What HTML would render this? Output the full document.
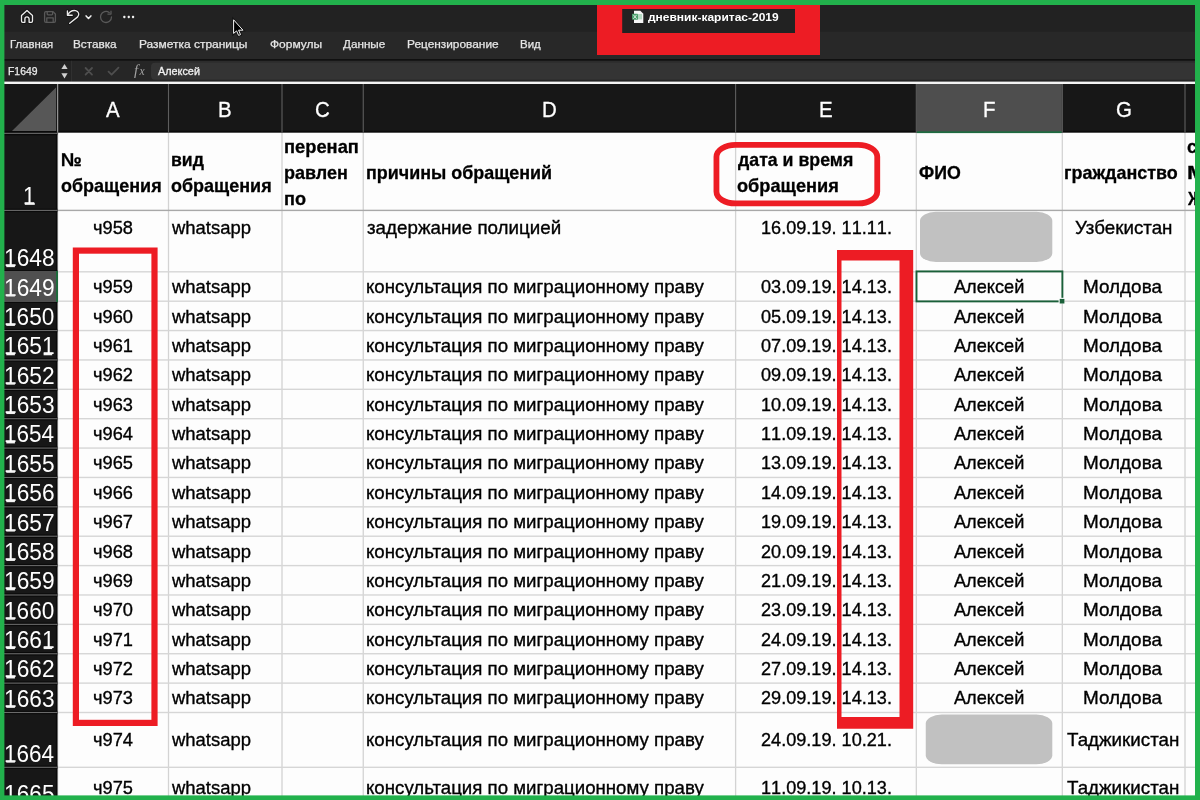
<!DOCTYPE html>
<html><head><meta charset="utf-8"><title>дневник-каритас-2019</title>
<style>
html,body{margin:0;padding:0;background:#fff;}
#p{will-change:transform;position:relative;width:1200px;height:800px;overflow:hidden;font-family:"Liberation Sans",sans-serif;}
.t{position:absolute;white-space:pre;transform-origin:0 50%;}
svg{position:absolute;left:0;top:0;}
</style></head><body><div id="p">
<svg width="1200" height="800" viewBox="0 0 1200 800">
<rect x="0" y="0" width="1200" height="800" fill="#171717"/>
<rect x="0" y="0" width="1200" height="84" fill="#222222"/>
<rect x="0" y="31.8" width="1200" height="52.2" fill="#282828"/>
<rect x="0" y="60" width="1200" height="24" fill="#2c2c2c"/>
<rect x="0" y="60" width="71" height="24" fill="#232323"/>
<rect x="71" y="60" width="1" height="24" fill="#303030"/>
<rect x="72" y="60" width="88" height="24" fill="#262626"/>
<rect x="151" y="62.8" width="1059" height="17" fill="#343434" rx="4" ry="4"/>
<rect x="160" y="79.8" width="1040" height="4.2" fill="#242424"/>
<rect x="0" y="59.2" width="1200" height="1.4" fill="#0c0c0c"/>
<rect x="0" y="81.6" width="1200" height="2.4" fill="#f4f4f4"/>
<rect x="0" y="130.8" width="1200" height="4.5" fill="#0a0a0a"/>
<rect x="57.3" y="132.7" width="1142.7" height="667.3" fill="#fdfdfd"/>
<rect x="597" y="5" width="223" height="50" fill="#ed1c24"/>
<rect x="622.2" y="9" width="172.8" height="24" fill="#222222"/>
<rect x="916.8" y="84" width="145" height="48.7" fill="#4e4e4e"/>
<rect x="916.8" y="131.3" width="145" height="1.8" fill="#1e6b41"/>
<rect x="56.95" y="84" width="1.1" height="48.7" fill="#5e5e5e"/>
<rect x="167.95" y="84" width="1.1" height="48.7" fill="#5e5e5e"/>
<rect x="281.45" y="84" width="1.1" height="48.7" fill="#5e5e5e"/>
<rect x="362.7" y="84" width="1.1" height="48.7" fill="#5e5e5e"/>
<rect x="735.05" y="84" width="1.1" height="48.7" fill="#5e5e5e"/>
<rect x="915.75" y="84" width="1.1" height="48.7" fill="#5e5e5e"/>
<rect x="1061.75" y="84" width="1.1" height="48.7" fill="#5e5e5e"/>
<rect x="1184.45" y="84" width="1.1" height="48.7" fill="#5e5e5e"/>
<polygon points="56,87.5 56,131 12,131" fill="#575757"/>
<rect x="167.85" y="133" width="1.3" height="667" fill="#d3d3d3"/>
<rect x="281.35" y="133" width="1.3" height="667" fill="#d3d3d3"/>
<rect x="362.6" y="133" width="1.3" height="667" fill="#d3d3d3"/>
<rect x="734.95" y="133" width="1.3" height="667" fill="#d3d3d3"/>
<rect x="915.65" y="133" width="1.3" height="667" fill="#d3d3d3"/>
<rect x="1061.65" y="133" width="1.3" height="667" fill="#d3d3d3"/>
<rect x="1184.35" y="133" width="1.3" height="667" fill="#d3d3d3"/>
<rect x="57.1" y="84" width="1.1" height="50" fill="#9a9a9a"/>
<rect x="57.3" y="134" width="0.8" height="666" fill="#8c8c8c"/>
<rect x="58" y="271.1" width="1142" height="1.4" fill="#d6d6d6"/>
<rect x="58" y="300.48" width="1142" height="1.4" fill="#d6d6d6"/>
<rect x="58" y="329.86" width="1142" height="1.4" fill="#d6d6d6"/>
<rect x="58" y="359.24" width="1142" height="1.4" fill="#d6d6d6"/>
<rect x="58" y="388.62" width="1142" height="1.4" fill="#d6d6d6"/>
<rect x="58" y="418" width="1142" height="1.4" fill="#d6d6d6"/>
<rect x="58" y="447.38" width="1142" height="1.4" fill="#d6d6d6"/>
<rect x="58" y="476.76" width="1142" height="1.4" fill="#d6d6d6"/>
<rect x="58" y="506.14" width="1142" height="1.4" fill="#d6d6d6"/>
<rect x="58" y="535.52" width="1142" height="1.4" fill="#d6d6d6"/>
<rect x="58" y="564.9" width="1142" height="1.4" fill="#d6d6d6"/>
<rect x="58" y="594.28" width="1142" height="1.4" fill="#d6d6d6"/>
<rect x="58" y="623.66" width="1142" height="1.4" fill="#d6d6d6"/>
<rect x="58" y="653.04" width="1142" height="1.4" fill="#d6d6d6"/>
<rect x="58" y="682.42" width="1142" height="1.4" fill="#d6d6d6"/>
<rect x="58" y="711.8" width="1142" height="1.4" fill="#d6d6d6"/>
<rect x="58" y="766.6" width="1142" height="1.4" fill="#d6d6d6"/>
<rect x="55.9" y="133" width="1.4" height="667" fill="#0a0a0a"/>
<rect x="0" y="131.65" width="57.3" height="3.4" fill="#0a0a0a"/>
<rect x="0" y="132.8" width="57.3" height="1.1" fill="#6a6a6a"/>
<rect x="0" y="208.7" width="57.3" height="3.4" fill="#0a0a0a"/>
<rect x="0" y="209.85" width="57.3" height="1.1" fill="#6a6a6a"/>
<rect x="0" y="270.1" width="57.3" height="3.4" fill="#0a0a0a"/>
<rect x="0" y="271.25" width="57.3" height="1.1" fill="#6a6a6a"/>
<rect x="0" y="299.48" width="57.3" height="3.4" fill="#0a0a0a"/>
<rect x="0" y="300.63" width="57.3" height="1.1" fill="#6a6a6a"/>
<rect x="0" y="328.86" width="57.3" height="3.4" fill="#0a0a0a"/>
<rect x="0" y="330.01" width="57.3" height="1.1" fill="#6a6a6a"/>
<rect x="0" y="358.24" width="57.3" height="3.4" fill="#0a0a0a"/>
<rect x="0" y="359.39" width="57.3" height="1.1" fill="#6a6a6a"/>
<rect x="0" y="387.62" width="57.3" height="3.4" fill="#0a0a0a"/>
<rect x="0" y="388.77" width="57.3" height="1.1" fill="#6a6a6a"/>
<rect x="0" y="417" width="57.3" height="3.4" fill="#0a0a0a"/>
<rect x="0" y="418.15" width="57.3" height="1.1" fill="#6a6a6a"/>
<rect x="0" y="446.38" width="57.3" height="3.4" fill="#0a0a0a"/>
<rect x="0" y="447.53" width="57.3" height="1.1" fill="#6a6a6a"/>
<rect x="0" y="475.76" width="57.3" height="3.4" fill="#0a0a0a"/>
<rect x="0" y="476.91" width="57.3" height="1.1" fill="#6a6a6a"/>
<rect x="0" y="505.14" width="57.3" height="3.4" fill="#0a0a0a"/>
<rect x="0" y="506.29" width="57.3" height="1.1" fill="#6a6a6a"/>
<rect x="0" y="534.52" width="57.3" height="3.4" fill="#0a0a0a"/>
<rect x="0" y="535.67" width="57.3" height="1.1" fill="#6a6a6a"/>
<rect x="0" y="563.9" width="57.3" height="3.4" fill="#0a0a0a"/>
<rect x="0" y="565.05" width="57.3" height="1.1" fill="#6a6a6a"/>
<rect x="0" y="593.28" width="57.3" height="3.4" fill="#0a0a0a"/>
<rect x="0" y="594.43" width="57.3" height="1.1" fill="#6a6a6a"/>
<rect x="0" y="622.66" width="57.3" height="3.4" fill="#0a0a0a"/>
<rect x="0" y="623.81" width="57.3" height="1.1" fill="#6a6a6a"/>
<rect x="0" y="652.04" width="57.3" height="3.4" fill="#0a0a0a"/>
<rect x="0" y="653.19" width="57.3" height="1.1" fill="#6a6a6a"/>
<rect x="0" y="681.42" width="57.3" height="3.4" fill="#0a0a0a"/>
<rect x="0" y="682.57" width="57.3" height="1.1" fill="#6a6a6a"/>
<rect x="0" y="710.8" width="57.3" height="3.4" fill="#0a0a0a"/>
<rect x="0" y="711.95" width="57.3" height="1.1" fill="#6a6a6a"/>
<rect x="0" y="765.6" width="57.3" height="3.4" fill="#0a0a0a"/>
<rect x="0" y="766.75" width="57.3" height="1.1" fill="#6a6a6a"/>
<rect x="58" y="209.7" width="1142" height="1.4" fill="#a8a8a8"/>
<rect x="0" y="271" width="57.3" height="30.78" fill="#505050"/>
<rect x="56" y="271" width="2" height="30.78" fill="#1e6b3c"/>
<rect x="920" y="211.8" width="132.3" height="50.2" fill="#c1c1c1" rx="16" ry="9"/>
<rect x="925.75" y="714.5" width="126.55" height="49.8" fill="#c1c1c1" rx="16" ry="9"/>
</svg>
<span class="t" style="left:9.74px;top:39.13px;font-size:11.3px;line-height:11.3px;color:#e6e6e6;transform:scaleX(1.0022);-webkit-text-stroke:0.25px #e6e6e6;">Главная</span>
<span class="t" style="left:73.46px;top:39.13px;font-size:11.3px;line-height:11.3px;color:#e6e6e6;transform:scaleX(1.0381);-webkit-text-stroke:0.25px #e6e6e6;">Вставка</span>
<span class="t" style="left:138.94px;top:39.13px;font-size:11.3px;line-height:11.3px;color:#e6e6e6;transform:scaleX(1.0580);-webkit-text-stroke:0.25px #e6e6e6;">Разметка страницы</span>
<span class="t" style="left:269.74px;top:39.13px;font-size:11.3px;line-height:11.3px;color:#e6e6e6;transform:scaleX(1.0607);-webkit-text-stroke:0.25px #e6e6e6;">Формулы</span>
<span class="t" style="left:342.84px;top:39.13px;font-size:11.3px;line-height:11.3px;color:#e6e6e6;transform:scaleX(1.0351);-webkit-text-stroke:0.25px #e6e6e6;">Данные</span>
<span class="t" style="left:406.95px;top:39.13px;font-size:11.3px;line-height:11.3px;color:#e6e6e6;transform:scaleX(1.0503);-webkit-text-stroke:0.25px #e6e6e6;">Рецензирование</span>
<span class="t" style="left:520.48px;top:39.13px;font-size:11.3px;line-height:11.3px;color:#e6e6e6;transform:scaleX(1.0165);-webkit-text-stroke:0.25px #e6e6e6;">Вид</span>
<span class="t" style="left:8.17px;top:65.71px;font-size:10.5px;line-height:10.5px;color:#ececec;transform:scaleX(0.9910);-webkit-text-stroke:0.25px #ececec;">F1649</span>
<span class="t" style="left:158.2px;top:65.81px;font-size:10.5px;line-height:10.5px;color:#f0f0f0;transform:scaleX(1.0326);-webkit-text-stroke:0.3px #f0f0f0;">Алексей</span>
<span class="t" style="left:647.94px;top:11.93px;font-size:11.3px;line-height:11.3px;font-weight:bold;color:#fff;transform:scaleX(1.0605);">дневник-каритас-2019</span>
<span class="t" style="left:106.2px;top:99.28px;font-size:22px;line-height:22px;color:#fff;transform:scaleX(0.9300);-webkit-text-stroke:0.3px #fff;">A</span>
<span class="t" style="left:218.14px;top:99.28px;font-size:22px;line-height:22px;color:#fff;transform:scaleX(0.9300);-webkit-text-stroke:0.3px #fff;">B</span>
<span class="t" style="left:315.11px;top:99.28px;font-size:22px;line-height:22px;color:#fff;transform:scaleX(0.9300);-webkit-text-stroke:0.3px #fff;">C</span>
<span class="t" style="left:541.7px;top:99.28px;font-size:22px;line-height:22px;color:#fff;transform:scaleX(0.9300);-webkit-text-stroke:0.3px #fff;">D</span>
<span class="t" style="left:818.74px;top:99.28px;font-size:22px;line-height:22px;color:#fff;transform:scaleX(0.9300);-webkit-text-stroke:0.3px #fff;">E</span>
<span class="t" style="left:982.6px;top:99.28px;font-size:22px;line-height:22px;color:#fff;transform:scaleX(0.9300);-webkit-text-stroke:0.3px #fff;">F</span>
<span class="t" style="left:1115.93px;top:99.28px;font-size:22px;line-height:22px;color:#fff;transform:scaleX(0.9300);-webkit-text-stroke:0.3px #fff;">G</span>
<span class="t" style="left:22.74px;top:184.83px;font-size:23px;line-height:23px;color:#fff;transform:scaleX(0.9595);">1</span>
<span class="t" style="left:3.8px;top:247.13px;font-size:23px;line-height:23px;color:#fff;transform:scaleX(0.9870);">1648</span>
<span class="t" style="left:3.79px;top:276.51px;font-size:23px;line-height:23px;color:#fff;transform:scaleX(0.9894);">1649</span>
<span class="t" style="left:3.8px;top:305.89px;font-size:23px;line-height:23px;color:#fff;transform:scaleX(0.9847);">1650</span>
<span class="t" style="left:3.79px;top:335.27px;font-size:23px;line-height:23px;color:#fff;transform:scaleX(0.9894);">1651</span>
<span class="t" style="left:3.79px;top:364.65px;font-size:23px;line-height:23px;color:#fff;transform:scaleX(0.9894);">1652</span>
<span class="t" style="left:3.8px;top:394.03px;font-size:23px;line-height:23px;color:#fff;transform:scaleX(0.9870);">1653</span>
<span class="t" style="left:3.81px;top:423.41px;font-size:23px;line-height:23px;color:#fff;transform:scaleX(0.9801);">1654</span>
<span class="t" style="left:3.8px;top:452.79px;font-size:23px;line-height:23px;color:#fff;transform:scaleX(0.9870);">1655</span>
<span class="t" style="left:3.8px;top:482.17px;font-size:23px;line-height:23px;color:#fff;transform:scaleX(0.9870);">1656</span>
<span class="t" style="left:3.79px;top:511.55px;font-size:23px;line-height:23px;color:#fff;transform:scaleX(0.9894);">1657</span>
<span class="t" style="left:3.8px;top:540.93px;font-size:23px;line-height:23px;color:#fff;transform:scaleX(0.9870);">1658</span>
<span class="t" style="left:3.79px;top:570.31px;font-size:23px;line-height:23px;color:#fff;transform:scaleX(0.9894);">1659</span>
<span class="t" style="left:3.8px;top:599.69px;font-size:23px;line-height:23px;color:#fff;transform:scaleX(0.9847);">1660</span>
<span class="t" style="left:3.79px;top:629.07px;font-size:23px;line-height:23px;color:#fff;transform:scaleX(0.9894);">1661</span>
<span class="t" style="left:3.79px;top:658.45px;font-size:23px;line-height:23px;color:#fff;transform:scaleX(0.9894);">1662</span>
<span class="t" style="left:3.8px;top:687.83px;font-size:23px;line-height:23px;color:#fff;transform:scaleX(0.9870);">1663</span>
<span class="t" style="left:3.81px;top:742.63px;font-size:23px;line-height:23px;color:#fff;transform:scaleX(0.9801);">1664</span>
<span class="t" style="left:3.8px;top:782.73px;font-size:23px;line-height:23px;color:#fff;transform:scaleX(0.9870);">1665</span>
<span class="t" style="left:60.79px;top:151.24px;font-size:18.5px;line-height:18.5px;font-weight:bold;transform:scaleX(1.0054);-webkit-text-stroke:0.3px #000;">№</span>
<span class="t" style="left:60.67px;top:177.44px;font-size:18.5px;line-height:18.5px;font-weight:bold;transform:scaleX(0.9719);-webkit-text-stroke:0.3px #000;">обращения</span>
<span class="t" style="left:170.85px;top:151.24px;font-size:18.5px;line-height:18.5px;font-weight:bold;transform:scaleX(0.9539);-webkit-text-stroke:0.3px #000;">вид</span>
<span class="t" style="left:171.37px;top:177.44px;font-size:18.5px;line-height:18.5px;font-weight:bold;transform:scaleX(0.9719);-webkit-text-stroke:0.3px #000;">обращения</span>
<span class="t" style="left:284.41px;top:137.94px;font-size:18.5px;line-height:18.5px;font-weight:bold;transform:scaleX(0.9895);-webkit-text-stroke:0.3px #000;">перенап</span>
<span class="t" style="left:284.43px;top:164.44px;font-size:18.5px;line-height:18.5px;font-weight:bold;transform:scaleX(0.9734);-webkit-text-stroke:0.3px #000;">равлен</span>
<span class="t" style="left:284.42px;top:190.14px;font-size:18.5px;line-height:18.5px;font-weight:bold;transform:scaleX(0.9793);-webkit-text-stroke:0.3px #000;">по</span>
<span class="t" style="left:365.84px;top:163.94px;font-size:18.5px;line-height:18.5px;font-weight:bold;transform:scaleX(0.9678);-webkit-text-stroke:0.3px #000;">причины обращений</span>
<span class="t" style="left:737.91px;top:151.24px;font-size:18.5px;line-height:18.5px;font-weight:bold;transform:scaleX(0.9591);-webkit-text-stroke:0.3px #000;">дата и время</span>
<span class="t" style="left:737.36px;top:177.44px;font-size:18.5px;line-height:18.5px;font-weight:bold;transform:scaleX(0.9837);-webkit-text-stroke:0.3px #000;">обращения</span>
<span class="t" style="left:919.47px;top:164.24px;font-size:18.5px;line-height:18.5px;font-weight:bold;transform:scaleX(0.9602);-webkit-text-stroke:0.3px #000;">ФИО</span>
<span class="t" style="left:1064.43px;top:164.24px;font-size:18.5px;line-height:18.5px;font-weight:bold;transform:scaleX(0.9694);-webkit-text-stroke:0.3px #000;">гражданство</span>
<span class="t" style="left:1187.36px;top:137.94px;font-size:18.5px;line-height:18.5px;font-weight:bold;transform:scaleX(0.9828);-webkit-text-stroke:0.3px #000;">с</span>
<span class="t" style="left:1186.52px;top:164.44px;font-size:18.5px;line-height:18.5px;font-weight:bold;transform:scaleX(1.2268);-webkit-text-stroke:0.3px #000;">М</span>
<span class="t" style="left:1188.08px;top:190.14px;font-size:18.5px;line-height:18.5px;font-weight:bold;transform:scaleX(0.8861);-webkit-text-stroke:0.3px #000;">Ж</span>
<span class="t" style="left:93.01px;top:218.84px;font-size:18.5px;line-height:18.5px;transform:scaleX(0.9850);-webkit-text-stroke:0.35px #000;">ч958</span>
<span class="t" style="left:171.89px;top:218.84px;font-size:18.5px;line-height:18.5px;transform:scaleX(0.9970);-webkit-text-stroke:0.35px #000;">whatsapp</span>
<span class="t" style="left:366.72px;top:218.84px;font-size:18.5px;line-height:18.5px;transform:scaleX(1.0147);-webkit-text-stroke:0.35px #000;">задержание полицией</span>
<span class="t" style="left:760.6px;top:218.84px;font-size:18.5px;line-height:18.5px;transform:scaleX(0.979);font-kerning:none;-webkit-text-stroke:0.35px #000;">16.09.19. 11.11.</span>
<span class="t" style="left:1074.56px;top:218.84px;font-size:18.5px;line-height:18.5px;transform:scaleX(1.0138);-webkit-text-stroke:0.35px #000;">Узбекистан</span>
<span class="t" style="left:93.06px;top:278.12px;font-size:18.5px;line-height:18.5px;transform:scaleX(0.9850);-webkit-text-stroke:0.35px #000;">ч959</span>
<span class="t" style="left:171.89px;top:278.12px;font-size:18.5px;line-height:18.5px;transform:scaleX(0.9970);-webkit-text-stroke:0.35px #000;">whatsapp</span>
<span class="t" style="left:365.89px;top:278.12px;font-size:18.5px;line-height:18.5px;transform:scaleX(1.0085);-webkit-text-stroke:0.35px #000;">консультация по миграционному праву</span>
<span class="t" style="left:760.6px;top:278.12px;font-size:18.5px;line-height:18.5px;transform:scaleX(0.979);font-kerning:none;-webkit-text-stroke:0.35px #000;">03.09.19. 14.13.</span>
<span class="t" style="left:954.3px;top:278.12px;font-size:18.5px;line-height:18.5px;transform:scaleX(0.9815);-webkit-text-stroke:0.35px #000;">Алексей</span>
<span class="t" style="left:1083.04px;top:278.12px;font-size:18.5px;line-height:18.5px;transform:scaleX(1.0218);-webkit-text-stroke:0.35px #000;">Молдова</span>
<span class="t" style="left:92.96px;top:307.5px;font-size:18.5px;line-height:18.5px;transform:scaleX(0.9850);-webkit-text-stroke:0.35px #000;">ч960</span>
<span class="t" style="left:171.89px;top:307.5px;font-size:18.5px;line-height:18.5px;transform:scaleX(0.9970);-webkit-text-stroke:0.35px #000;">whatsapp</span>
<span class="t" style="left:365.89px;top:307.5px;font-size:18.5px;line-height:18.5px;transform:scaleX(1.0085);-webkit-text-stroke:0.35px #000;">консультация по миграционному праву</span>
<span class="t" style="left:760.6px;top:307.5px;font-size:18.5px;line-height:18.5px;transform:scaleX(0.979);font-kerning:none;-webkit-text-stroke:0.35px #000;">05.09.19. 14.13.</span>
<span class="t" style="left:954.3px;top:307.5px;font-size:18.5px;line-height:18.5px;transform:scaleX(0.9815);-webkit-text-stroke:0.35px #000;">Алексей</span>
<span class="t" style="left:1083.04px;top:307.5px;font-size:18.5px;line-height:18.5px;transform:scaleX(1.0218);-webkit-text-stroke:0.35px #000;">Молдова</span>
<span class="t" style="left:93.06px;top:336.88px;font-size:18.5px;line-height:18.5px;transform:scaleX(0.9850);-webkit-text-stroke:0.35px #000;">ч961</span>
<span class="t" style="left:171.89px;top:336.88px;font-size:18.5px;line-height:18.5px;transform:scaleX(0.9970);-webkit-text-stroke:0.35px #000;">whatsapp</span>
<span class="t" style="left:365.89px;top:336.88px;font-size:18.5px;line-height:18.5px;transform:scaleX(1.0085);-webkit-text-stroke:0.35px #000;">консультация по миграционному праву</span>
<span class="t" style="left:760.6px;top:336.88px;font-size:18.5px;line-height:18.5px;transform:scaleX(0.979);font-kerning:none;-webkit-text-stroke:0.35px #000;">07.09.19. 14.13.</span>
<span class="t" style="left:954.3px;top:336.88px;font-size:18.5px;line-height:18.5px;transform:scaleX(0.9815);-webkit-text-stroke:0.35px #000;">Алексей</span>
<span class="t" style="left:1083.04px;top:336.88px;font-size:18.5px;line-height:18.5px;transform:scaleX(1.0218);-webkit-text-stroke:0.35px #000;">Молдова</span>
<span class="t" style="left:93.06px;top:366.26px;font-size:18.5px;line-height:18.5px;transform:scaleX(0.9850);-webkit-text-stroke:0.35px #000;">ч962</span>
<span class="t" style="left:171.89px;top:366.26px;font-size:18.5px;line-height:18.5px;transform:scaleX(0.9970);-webkit-text-stroke:0.35px #000;">whatsapp</span>
<span class="t" style="left:365.89px;top:366.26px;font-size:18.5px;line-height:18.5px;transform:scaleX(1.0085);-webkit-text-stroke:0.35px #000;">консультация по миграционному праву</span>
<span class="t" style="left:760.6px;top:366.26px;font-size:18.5px;line-height:18.5px;transform:scaleX(0.979);font-kerning:none;-webkit-text-stroke:0.35px #000;">09.09.19. 14.13.</span>
<span class="t" style="left:954.3px;top:366.26px;font-size:18.5px;line-height:18.5px;transform:scaleX(0.9815);-webkit-text-stroke:0.35px #000;">Алексей</span>
<span class="t" style="left:1083.04px;top:366.26px;font-size:18.5px;line-height:18.5px;transform:scaleX(1.0218);-webkit-text-stroke:0.35px #000;">Молдова</span>
<span class="t" style="left:93.01px;top:395.64px;font-size:18.5px;line-height:18.5px;transform:scaleX(0.9850);-webkit-text-stroke:0.35px #000;">ч963</span>
<span class="t" style="left:171.89px;top:395.64px;font-size:18.5px;line-height:18.5px;transform:scaleX(0.9970);-webkit-text-stroke:0.35px #000;">whatsapp</span>
<span class="t" style="left:365.89px;top:395.64px;font-size:18.5px;line-height:18.5px;transform:scaleX(1.0085);-webkit-text-stroke:0.35px #000;">консультация по миграционному праву</span>
<span class="t" style="left:760.6px;top:395.64px;font-size:18.5px;line-height:18.5px;transform:scaleX(0.979);font-kerning:none;-webkit-text-stroke:0.35px #000;">10.09.19. 14.13.</span>
<span class="t" style="left:954.3px;top:395.64px;font-size:18.5px;line-height:18.5px;transform:scaleX(0.9815);-webkit-text-stroke:0.35px #000;">Алексей</span>
<span class="t" style="left:1083.04px;top:395.64px;font-size:18.5px;line-height:18.5px;transform:scaleX(1.0218);-webkit-text-stroke:0.35px #000;">Молдова</span>
<span class="t" style="left:92.87px;top:425.02px;font-size:18.5px;line-height:18.5px;transform:scaleX(0.9850);-webkit-text-stroke:0.35px #000;">ч964</span>
<span class="t" style="left:171.89px;top:425.02px;font-size:18.5px;line-height:18.5px;transform:scaleX(0.9970);-webkit-text-stroke:0.35px #000;">whatsapp</span>
<span class="t" style="left:365.89px;top:425.02px;font-size:18.5px;line-height:18.5px;transform:scaleX(1.0085);-webkit-text-stroke:0.35px #000;">консультация по миграционному праву</span>
<span class="t" style="left:760.6px;top:425.02px;font-size:18.5px;line-height:18.5px;transform:scaleX(0.979);font-kerning:none;-webkit-text-stroke:0.35px #000;">11.09.19. 14.13.</span>
<span class="t" style="left:954.3px;top:425.02px;font-size:18.5px;line-height:18.5px;transform:scaleX(0.9815);-webkit-text-stroke:0.35px #000;">Алексей</span>
<span class="t" style="left:1083.04px;top:425.02px;font-size:18.5px;line-height:18.5px;transform:scaleX(1.0218);-webkit-text-stroke:0.35px #000;">Молдова</span>
<span class="t" style="left:93.01px;top:454.4px;font-size:18.5px;line-height:18.5px;transform:scaleX(0.9850);-webkit-text-stroke:0.35px #000;">ч965</span>
<span class="t" style="left:171.89px;top:454.4px;font-size:18.5px;line-height:18.5px;transform:scaleX(0.9970);-webkit-text-stroke:0.35px #000;">whatsapp</span>
<span class="t" style="left:365.89px;top:454.4px;font-size:18.5px;line-height:18.5px;transform:scaleX(1.0085);-webkit-text-stroke:0.35px #000;">консультация по миграционному праву</span>
<span class="t" style="left:760.6px;top:454.4px;font-size:18.5px;line-height:18.5px;transform:scaleX(0.979);font-kerning:none;-webkit-text-stroke:0.35px #000;">13.09.19. 14.13.</span>
<span class="t" style="left:954.3px;top:454.4px;font-size:18.5px;line-height:18.5px;transform:scaleX(0.9815);-webkit-text-stroke:0.35px #000;">Алексей</span>
<span class="t" style="left:1083.04px;top:454.4px;font-size:18.5px;line-height:18.5px;transform:scaleX(1.0218);-webkit-text-stroke:0.35px #000;">Молдова</span>
<span class="t" style="left:93.01px;top:483.78px;font-size:18.5px;line-height:18.5px;transform:scaleX(0.9850);-webkit-text-stroke:0.35px #000;">ч966</span>
<span class="t" style="left:171.89px;top:483.78px;font-size:18.5px;line-height:18.5px;transform:scaleX(0.9970);-webkit-text-stroke:0.35px #000;">whatsapp</span>
<span class="t" style="left:365.89px;top:483.78px;font-size:18.5px;line-height:18.5px;transform:scaleX(1.0085);-webkit-text-stroke:0.35px #000;">консультация по миграционному праву</span>
<span class="t" style="left:760.6px;top:483.78px;font-size:18.5px;line-height:18.5px;transform:scaleX(0.979);font-kerning:none;-webkit-text-stroke:0.35px #000;">14.09.19. 14.13.</span>
<span class="t" style="left:954.3px;top:483.78px;font-size:18.5px;line-height:18.5px;transform:scaleX(0.9815);-webkit-text-stroke:0.35px #000;">Алексей</span>
<span class="t" style="left:1083.04px;top:483.78px;font-size:18.5px;line-height:18.5px;transform:scaleX(1.0218);-webkit-text-stroke:0.35px #000;">Молдова</span>
<span class="t" style="left:93.06px;top:513.16px;font-size:18.5px;line-height:18.5px;transform:scaleX(0.9850);-webkit-text-stroke:0.35px #000;">ч967</span>
<span class="t" style="left:171.89px;top:513.16px;font-size:18.5px;line-height:18.5px;transform:scaleX(0.9970);-webkit-text-stroke:0.35px #000;">whatsapp</span>
<span class="t" style="left:365.89px;top:513.16px;font-size:18.5px;line-height:18.5px;transform:scaleX(1.0085);-webkit-text-stroke:0.35px #000;">консультация по миграционному праву</span>
<span class="t" style="left:760.6px;top:513.16px;font-size:18.5px;line-height:18.5px;transform:scaleX(0.979);font-kerning:none;-webkit-text-stroke:0.35px #000;">19.09.19. 14.13.</span>
<span class="t" style="left:954.3px;top:513.16px;font-size:18.5px;line-height:18.5px;transform:scaleX(0.9815);-webkit-text-stroke:0.35px #000;">Алексей</span>
<span class="t" style="left:1083.04px;top:513.16px;font-size:18.5px;line-height:18.5px;transform:scaleX(1.0218);-webkit-text-stroke:0.35px #000;">Молдова</span>
<span class="t" style="left:93.01px;top:542.54px;font-size:18.5px;line-height:18.5px;transform:scaleX(0.9850);-webkit-text-stroke:0.35px #000;">ч968</span>
<span class="t" style="left:171.89px;top:542.54px;font-size:18.5px;line-height:18.5px;transform:scaleX(0.9970);-webkit-text-stroke:0.35px #000;">whatsapp</span>
<span class="t" style="left:365.89px;top:542.54px;font-size:18.5px;line-height:18.5px;transform:scaleX(1.0085);-webkit-text-stroke:0.35px #000;">консультация по миграционному праву</span>
<span class="t" style="left:760.6px;top:542.54px;font-size:18.5px;line-height:18.5px;transform:scaleX(0.979);font-kerning:none;-webkit-text-stroke:0.35px #000;">20.09.19. 14.13.</span>
<span class="t" style="left:954.3px;top:542.54px;font-size:18.5px;line-height:18.5px;transform:scaleX(0.9815);-webkit-text-stroke:0.35px #000;">Алексей</span>
<span class="t" style="left:1083.04px;top:542.54px;font-size:18.5px;line-height:18.5px;transform:scaleX(1.0218);-webkit-text-stroke:0.35px #000;">Молдова</span>
<span class="t" style="left:93.06px;top:571.92px;font-size:18.5px;line-height:18.5px;transform:scaleX(0.9850);-webkit-text-stroke:0.35px #000;">ч969</span>
<span class="t" style="left:171.89px;top:571.92px;font-size:18.5px;line-height:18.5px;transform:scaleX(0.9970);-webkit-text-stroke:0.35px #000;">whatsapp</span>
<span class="t" style="left:365.89px;top:571.92px;font-size:18.5px;line-height:18.5px;transform:scaleX(1.0085);-webkit-text-stroke:0.35px #000;">консультация по миграционному праву</span>
<span class="t" style="left:760.6px;top:571.92px;font-size:18.5px;line-height:18.5px;transform:scaleX(0.979);font-kerning:none;-webkit-text-stroke:0.35px #000;">21.09.19. 14.13.</span>
<span class="t" style="left:954.3px;top:571.92px;font-size:18.5px;line-height:18.5px;transform:scaleX(0.9815);-webkit-text-stroke:0.35px #000;">Алексей</span>
<span class="t" style="left:1083.04px;top:571.92px;font-size:18.5px;line-height:18.5px;transform:scaleX(1.0218);-webkit-text-stroke:0.35px #000;">Молдова</span>
<span class="t" style="left:92.96px;top:601.3px;font-size:18.5px;line-height:18.5px;transform:scaleX(0.9850);-webkit-text-stroke:0.35px #000;">ч970</span>
<span class="t" style="left:171.89px;top:601.3px;font-size:18.5px;line-height:18.5px;transform:scaleX(0.9970);-webkit-text-stroke:0.35px #000;">whatsapp</span>
<span class="t" style="left:365.89px;top:601.3px;font-size:18.5px;line-height:18.5px;transform:scaleX(1.0085);-webkit-text-stroke:0.35px #000;">консультация по миграционному праву</span>
<span class="t" style="left:760.6px;top:601.3px;font-size:18.5px;line-height:18.5px;transform:scaleX(0.979);font-kerning:none;-webkit-text-stroke:0.35px #000;">23.09.19. 14.13.</span>
<span class="t" style="left:954.3px;top:601.3px;font-size:18.5px;line-height:18.5px;transform:scaleX(0.9815);-webkit-text-stroke:0.35px #000;">Алексей</span>
<span class="t" style="left:1083.04px;top:601.3px;font-size:18.5px;line-height:18.5px;transform:scaleX(1.0218);-webkit-text-stroke:0.35px #000;">Молдова</span>
<span class="t" style="left:93.06px;top:630.68px;font-size:18.5px;line-height:18.5px;transform:scaleX(0.9850);-webkit-text-stroke:0.35px #000;">ч971</span>
<span class="t" style="left:171.89px;top:630.68px;font-size:18.5px;line-height:18.5px;transform:scaleX(0.9970);-webkit-text-stroke:0.35px #000;">whatsapp</span>
<span class="t" style="left:365.89px;top:630.68px;font-size:18.5px;line-height:18.5px;transform:scaleX(1.0085);-webkit-text-stroke:0.35px #000;">консультация по миграционному праву</span>
<span class="t" style="left:760.6px;top:630.68px;font-size:18.5px;line-height:18.5px;transform:scaleX(0.979);font-kerning:none;-webkit-text-stroke:0.35px #000;">24.09.19. 14.13.</span>
<span class="t" style="left:954.3px;top:630.68px;font-size:18.5px;line-height:18.5px;transform:scaleX(0.9815);-webkit-text-stroke:0.35px #000;">Алексей</span>
<span class="t" style="left:1083.04px;top:630.68px;font-size:18.5px;line-height:18.5px;transform:scaleX(1.0218);-webkit-text-stroke:0.35px #000;">Молдова</span>
<span class="t" style="left:93.06px;top:660.06px;font-size:18.5px;line-height:18.5px;transform:scaleX(0.9850);-webkit-text-stroke:0.35px #000;">ч972</span>
<span class="t" style="left:171.89px;top:660.06px;font-size:18.5px;line-height:18.5px;transform:scaleX(0.9970);-webkit-text-stroke:0.35px #000;">whatsapp</span>
<span class="t" style="left:365.89px;top:660.06px;font-size:18.5px;line-height:18.5px;transform:scaleX(1.0085);-webkit-text-stroke:0.35px #000;">консультация по миграционному праву</span>
<span class="t" style="left:760.6px;top:660.06px;font-size:18.5px;line-height:18.5px;transform:scaleX(0.979);font-kerning:none;-webkit-text-stroke:0.35px #000;">27.09.19. 14.13.</span>
<span class="t" style="left:954.3px;top:660.06px;font-size:18.5px;line-height:18.5px;transform:scaleX(0.9815);-webkit-text-stroke:0.35px #000;">Алексей</span>
<span class="t" style="left:1083.04px;top:660.06px;font-size:18.5px;line-height:18.5px;transform:scaleX(1.0218);-webkit-text-stroke:0.35px #000;">Молдова</span>
<span class="t" style="left:93.01px;top:689.44px;font-size:18.5px;line-height:18.5px;transform:scaleX(0.9850);-webkit-text-stroke:0.35px #000;">ч973</span>
<span class="t" style="left:171.89px;top:689.44px;font-size:18.5px;line-height:18.5px;transform:scaleX(0.9970);-webkit-text-stroke:0.35px #000;">whatsapp</span>
<span class="t" style="left:365.89px;top:689.44px;font-size:18.5px;line-height:18.5px;transform:scaleX(1.0085);-webkit-text-stroke:0.35px #000;">консультация по миграционному праву</span>
<span class="t" style="left:760.6px;top:689.44px;font-size:18.5px;line-height:18.5px;transform:scaleX(0.979);font-kerning:none;-webkit-text-stroke:0.35px #000;">29.09.19. 14.13.</span>
<span class="t" style="left:954.3px;top:689.44px;font-size:18.5px;line-height:18.5px;transform:scaleX(0.9815);-webkit-text-stroke:0.35px #000;">Алексей</span>
<span class="t" style="left:1083.04px;top:689.44px;font-size:18.5px;line-height:18.5px;transform:scaleX(1.0218);-webkit-text-stroke:0.35px #000;">Молдова</span>
<span class="t" style="left:92.87px;top:731.34px;font-size:18.5px;line-height:18.5px;transform:scaleX(0.9850);-webkit-text-stroke:0.35px #000;">ч974</span>
<span class="t" style="left:171.89px;top:731.34px;font-size:18.5px;line-height:18.5px;transform:scaleX(0.9970);-webkit-text-stroke:0.35px #000;">whatsapp</span>
<span class="t" style="left:365.89px;top:731.34px;font-size:18.5px;line-height:18.5px;transform:scaleX(1.0085);-webkit-text-stroke:0.35px #000;">консультация по миграционному праву</span>
<span class="t" style="left:760.6px;top:731.34px;font-size:18.5px;line-height:18.5px;transform:scaleX(0.979);font-kerning:none;-webkit-text-stroke:0.35px #000;">24.09.19. 10.21.</span>
<span class="t" style="left:1067.15px;top:731.34px;font-size:18.5px;line-height:18.5px;transform:scaleX(1.0155);-webkit-text-stroke:0.35px #000;">Таджикистан</span>
<span class="t" style="left:93.01px;top:778.84px;font-size:18.5px;line-height:18.5px;transform:scaleX(0.9850);-webkit-text-stroke:0.35px #000;">ч975</span>
<span class="t" style="left:171.89px;top:778.84px;font-size:18.5px;line-height:18.5px;transform:scaleX(0.9970);-webkit-text-stroke:0.35px #000;">whatsapp</span>
<span class="t" style="left:365.89px;top:778.84px;font-size:18.5px;line-height:18.5px;transform:scaleX(1.0085);-webkit-text-stroke:0.35px #000;">консультация по миграционному праву</span>
<span class="t" style="left:760.6px;top:778.84px;font-size:18.5px;line-height:18.5px;transform:scaleX(0.979);font-kerning:none;-webkit-text-stroke:0.35px #000;">11.09.19. 10.13.</span>
<span class="t" style="left:1067.15px;top:778.84px;font-size:18.5px;line-height:18.5px;transform:scaleX(1.0155);-webkit-text-stroke:0.35px #000;">Таджикистан</span>
<span class="t" style="left:134px;top:63px;font-family:'Liberation Serif',serif;font-style:italic;font-size:15px;line-height:15px;color:#a2a2a2;">f</span>
<span class="t" style="left:139.6px;top:66.4px;font-family:'Liberation Serif',serif;font-style:italic;font-size:11.5px;line-height:11.5px;color:#a2a2a2;">x</span>
<svg width="1200" height="800" viewBox="0 0 1200 800">
<rect x="24.8" y="203.15" width="10" height="1.7" fill="#f4f4f4"/>
<rect x="6.3" y="265.45" width="8.6" height="1.7" fill="#f4f4f4"/>
<rect x="6.3" y="294.83" width="8.6" height="1.7" fill="#f4f4f4"/>
<rect x="6.3" y="324.21" width="8.6" height="1.7" fill="#f4f4f4"/>
<rect x="6.3" y="353.59" width="8.6" height="1.7" fill="#f4f4f4"/>
<rect x="43.6" y="353.59" width="8.6" height="1.7" fill="#f4f4f4"/>
<rect x="6.3" y="382.97" width="8.6" height="1.7" fill="#f4f4f4"/>
<rect x="6.3" y="412.35" width="8.6" height="1.7" fill="#f4f4f4"/>
<rect x="6.3" y="441.73" width="8.6" height="1.7" fill="#f4f4f4"/>
<rect x="6.3" y="471.11" width="8.6" height="1.7" fill="#f4f4f4"/>
<rect x="6.3" y="500.49" width="8.6" height="1.7" fill="#f4f4f4"/>
<rect x="6.3" y="529.87" width="8.6" height="1.7" fill="#f4f4f4"/>
<rect x="6.3" y="559.25" width="8.6" height="1.7" fill="#f4f4f4"/>
<rect x="6.3" y="588.63" width="8.6" height="1.7" fill="#f4f4f4"/>
<rect x="6.3" y="618.01" width="8.6" height="1.7" fill="#f4f4f4"/>
<rect x="6.3" y="647.39" width="8.6" height="1.7" fill="#f4f4f4"/>
<rect x="43.6" y="647.39" width="8.6" height="1.7" fill="#f4f4f4"/>
<rect x="6.3" y="676.77" width="8.6" height="1.7" fill="#f4f4f4"/>
<rect x="6.3" y="706.15" width="8.6" height="1.7" fill="#f4f4f4"/>
<rect x="6.3" y="760.95" width="8.6" height="1.7" fill="#f4f4f4"/>
<rect x="6.3" y="801.05" width="8.6" height="1.7" fill="#f4f4f4"/>
<rect x="916.5" y="271.4" width="145.9" height="30" fill="none" stroke="#1a6039" stroke-width="1.9"/>
<rect x="1058.6" y="297.8" width="5.8" height="5.7" fill="#fdfdfd"/>
<rect x="1059.7" y="298.9" width="4.7" height="4.6" fill="#1a6039"/>
<rect x="75.9" y="250.6" width="78.6" height="472.3" fill="none" stroke="#ed1c24" stroke-width="6.2"/>
<path fill-rule="evenodd" fill="#ed1c24" d="M837 250 H913.2 V728.8 H837 Z M841.5 260.5 V717 H899.5 V260.5 Z"/>
<rect x="716.45" y="144.85" width="160.8" height="58.6" rx="19" ry="12" fill="none" stroke="#ed1c24" stroke-width="5.8"/>

<g fill="none" stroke-linecap="round" stroke-linejoin="round">
 <path d="M21.5 15.4 L27 10.4 L32.5 15.4 V21.1 a1.2 1.2 0 0 1 -1.2 1.2 H29.1 V18.9 a2.1 2.1 0 0 0 -4.2 0 V22.3 H22.7 a1.2 1.2 0 0 1 -1.2 -1.2 Z" stroke="#111" stroke-width="3"/>
 <path d="M21.5 15.4 L27 10.4 L32.5 15.4 V21.1 a1.2 1.2 0 0 1 -1.2 1.2 H29.1 V18.9 a2.1 2.1 0 0 0 -4.2 0 V22.3 H22.7 a1.2 1.2 0 0 1 -1.2 -1.2 Z" stroke="#ececec" stroke-width="1.35"/>
 <g stroke="#595959" stroke-width="1.3">
  <path d="M46 11.6 H53 L55.4 14 V21 a1.4 1.4 0 0 1 -1.4 1.4 H46 a1.4 1.4 0 0 1 -1.4 -1.4 V13 a1.4 1.4 0 0 1 1.4 -1.4 Z"/>
  <path d="M47.2 11.8 V14 a0.8 0.8 0 0 0 0.8 0.8 H51.8 a0.8 0.8 0 0 0 0.8 -0.8 V11.8"/>
  <path d="M46.8 22.2 V17.8 H53.2 V22.2"/>
 </g>
 <g stroke="#111" stroke-width="3"><path d="M67.4 10.8 V15.2 H72.2"/><path d="M67.7 15 C69.5 11.6 73 10.2 75.6 10.6 C78.6 11.2 79.8 14.6 77.7 16.9 L69.7 23.3"/></g>
 <path d="M67.4 10.8 V15.2 H72.2" stroke="#ececec" stroke-width="1.35"/>
 <path d="M67.7 15 C69.5 11.6 73 10.2 75.6 10.6 C78.6 11.2 79.8 14.6 77.7 16.9 L69.7 23.3" stroke="#ececec" stroke-width="1.35"/>
 <path d="M86.1 15.9 L88.5 18.5 L90.9 15.9" stroke="#f2f2f2" stroke-width="1.5"/>
 <path d="M111.5 17 a5.5 5.5 0 1 1 -2.3 -4.5" stroke="#595959" stroke-width="1.3"/>
 <path d="M111 11.2 V14.1 H107.9" stroke="#595959" stroke-width="1.3"/>
 <g fill="#f2f2f2" stroke="none"><rect x="123.2" y="15.85" width="2.3" height="2.3" rx="0.8"/><rect x="127.6" y="15.85" width="2.3" height="2.3" rx="0.8"/><rect x="131.9" y="15.85" width="2.3" height="2.3" rx="0.8"/></g>
 <path d="M233.6 20.2 V33.4 L236.6 30.9 L238.6 35.4 L240.5 34.6 L238.6 30.2 H242.6 Z" fill="#000" stroke="#161616" stroke-width="2.8" stroke-linejoin="miter"/>
 <path d="M233.6 20.2 V33.4 L236.6 30.9 L238.6 35.4 L240.5 34.6 L238.6 30.2 H242.6 Z" fill="#000" stroke="#f4f4f4" stroke-width="1" stroke-linejoin="miter"/>
 <path d="M85.6 68 L92 74.6 M92 68 L85.6 74.6" stroke="#4e4e4e" stroke-width="1.8"/>
 <path d="M108.5 71.6 L111.6 74.6 L118.5 67.6" stroke="#4e4e4e" stroke-width="1.8"/>
 <polygon points="61.4,69 67.6,69 64.5,64" fill="#d0d0d0"/>
 <polygon points="61.4,73.2 67.6,73.2 64.5,78.4" fill="#d0d0d0"/>
 <path d="M634 10.7 H640.3 L643.3 13.8 V23 H634 Z" fill="#f6f6f6"/>
 <rect x="637.5" y="14" width="4.6" height="5.4" fill="#b4d8c1"/>
 <rect x="632" y="13.8" width="6" height="5.9" rx="0.6" fill="#4a9e6b"/>
 <path d="M633.6 15.1 L636.4 18.4 M636.4 15.1 L633.6 18.4" stroke="#e8f4ec" stroke-width="0.9"/>
</g>

<rect x="0" y="0" width="1200" height="5" fill="#22b14c"/>
<rect x="0" y="795.4" width="1200" height="4.6" fill="#22b14c"/>
<rect x="0" y="0" width="4.4" height="800" fill="#22b14c"/>
<rect x="1195" y="0" width="5" height="800" fill="#22b14c"/>
</svg>
</div></body></html>
